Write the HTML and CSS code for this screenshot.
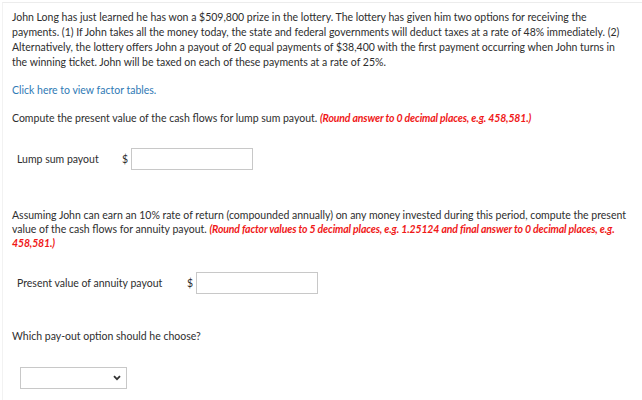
FILE: index.html
```html
<!DOCTYPE html>
<html>
<head>
<meta charset="utf-8">
<link rel="stylesheet" href="styles.css">
</head>
<body>
<div class="frame">
  <p class="para">John Long has just learned he has won a $509,800 prize in the lottery. The lottery has given him two options for receiving the payments. (1) If John takes all the money today, the state and federal governments will deduct taxes at a rate of 48% immediately. (2) Alternatively, the lottery offers John a payout of 20 equal payments of $38,400 with the first payment occurring when John turns in the winning ticket. John will be taxed on each of these payments at a rate of 25%.</p>
  <p class="link-row"><a class="link" href="#">Click here to view factor tables.</a></p>
  <p class="q1">Compute the present value of the cash flows for lump sum payout. <span class="hint">(Round answer to 0 decimal places, e.g. 458,581.)</span></p>
  <div class="row row1">
    <span class="label lbl1">Lump sum payout</span>
    <span class="dollar">$</span>
    <input class="box" type="text">
  </div>
  <p class="q2">Assuming John can earn an 10% rate of return (compounded annually) on any money invested during this period, compute the present value of the cash flows for annuity payout. <span class="hint">(Round factor values to 5 decimal places, e.g. 1.25124 and final answer to 0 decimal places, e.g. 458,581.)</span></p>
  <div class="row row2">
    <span class="label lbl2">Present value of annuity payout</span>
    <span class="dollar">$</span>
    <input class="box" type="text">
  </div>
  <p class="q3">Which pay-out option should he choose?</p>
  <div class="sel">
    <svg class="chev" width="8" height="6" viewBox="0 0 8 6"><path d="M1 1.2 L4 4.2 L7 1.2" fill="none" stroke="#333" stroke-width="1.8"/></svg>
  </div>
</div>
</body>
</html>
```
FILE: styles.css
```css
html, body {
  margin: 0;
  padding: 0;
  background: #fff;
}
body {
  font-family: Lato, "Open Sans", sans-serif;
  font-size: 10.5px;
  color: #2e2e2e;
}
.frame {
  margin: 2px 0 0 2px;
  border-top: 1px solid #ececec;
  border-left: 1px solid #f2f2f2;
  padding: 7px 10px 0 9px;
  height: 400px;
  box-sizing: border-box;
}
p {
  margin: 0;
}
.para {
  line-height: 15px;
}
.link-row {
  margin-top: 13px;
  line-height: 15px;
}
.link {
  color: #2f7ab5;
  text-decoration: none;
}
.q1 {
  margin-top: 13px;
  line-height: 15px;
}
.hint {
  color: #f01818;
  font-weight: bold;
  font-style: italic;
  letter-spacing: -0.15px;
}
.row {
  display: flex;
  align-items: center;
}
.row1 {
  margin-top: 22px;
}
.label {
  margin-left: 5px;
}
.lbl1 {
  width: 105px;
}
.lbl2 {
  width: 170px;
}
.dollar {
  width: 9px;
}
.box {
  width: 122px;
  height: 22px;
  box-sizing: border-box;
  border: 1px solid #c8c8c8;
  margin: 0;
  padding: 0;
}
.q2 {
  margin-top: 38px;
  line-height: 14px;
}
.row2 {
  margin-top: 22px;
}
.q3 {
  margin-top: 35px;
  line-height: 15px;
}
.sel {
  margin-top: 23px;
  margin-left: 8px;
  width: 107px;
  height: 22px;
  box-sizing: border-box;
  border: 1px solid #c8c8c8;
  display: flex;
  align-items: center;
  justify-content: flex-end;
  padding-right: 5px;
}
```
